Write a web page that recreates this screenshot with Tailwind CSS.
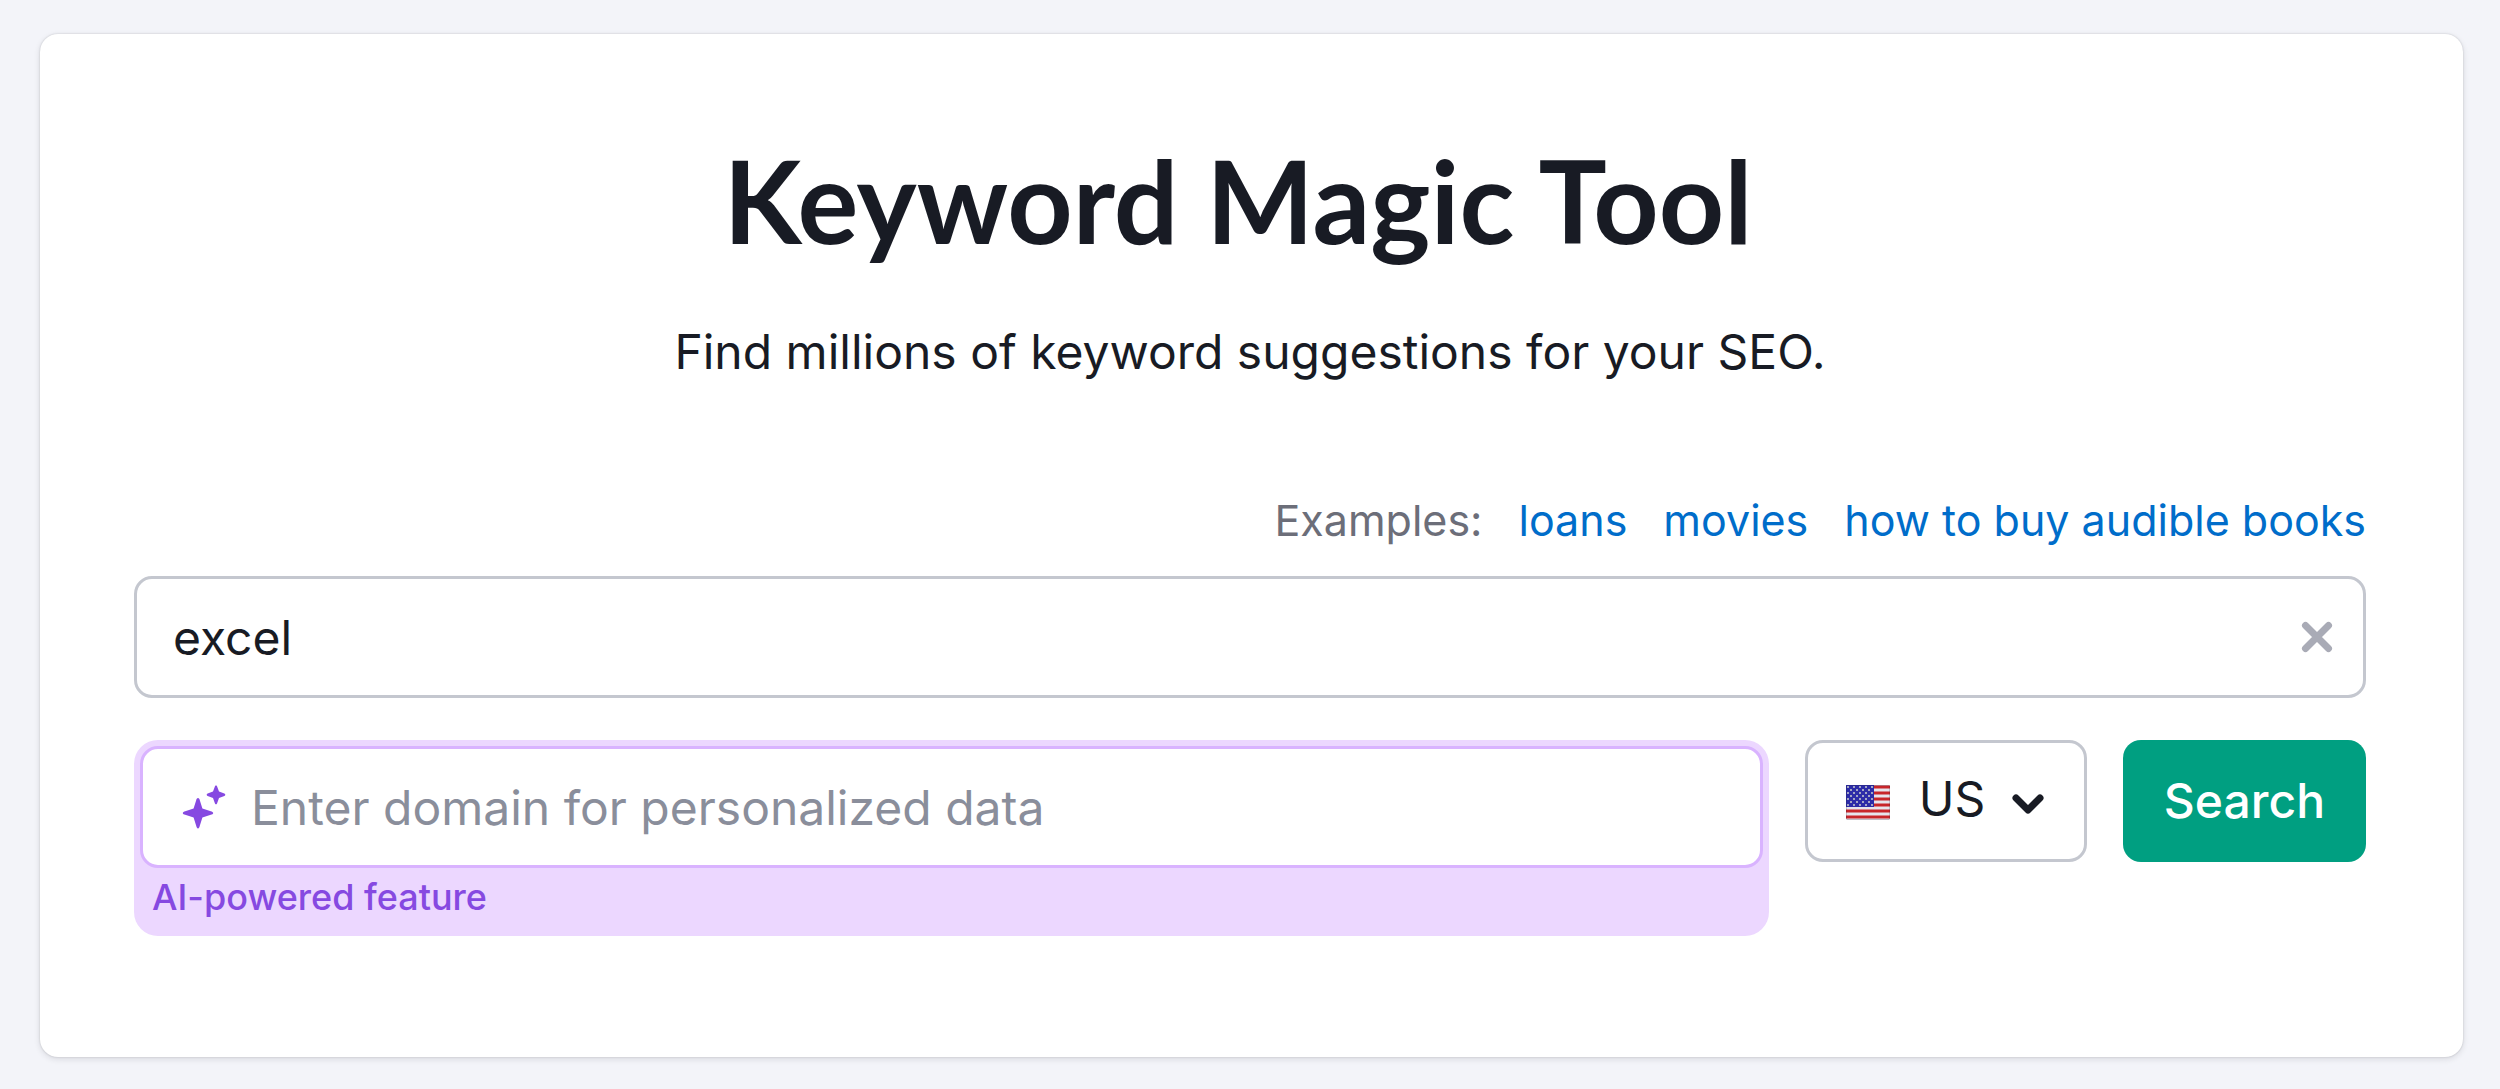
<!DOCTYPE html>
<html lang="en">
<head>
    <meta charset="UTF-8">
    <meta name="viewport" content="width=device-width, initial-scale=1.0">
    <title>Keyword Magic Tool</title>
    <script src="https://cdn.jsdelivr.net/npm/@tailwindcss/browser@4"></script>
</head>
<body class="bg-[#f3f4f9] font-['Inter',sans-serif] text-[#181b24]">
    <main class="mt-[34px] mr-[37px] mb-8 ml-10 rounded-[18px] bg-white pt-[94px] pr-[97px] pb-[121px] pl-[94px] shadow-[0_0_2px_rgba(25,27,35,0.2),0_2px_6px_rgba(25,27,35,0.12)]">
        <h1 class="pr-6 text-center font-['Lato',sans-serif] text-[114px] leading-[144px] font-bold">Keyword Magic Tool</h1>
        <p class="mt-11 text-center text-[48px] leading-[72px]">Find millions of keyword suggestions for your SEO.</p>

        <form id="searchForm" class="mt-[100px]">
            <div class="flex justify-end gap-9 text-[43px] leading-[64px]">
                <span class="text-[#6c6e79]">Examples:</span>
                <a href="#" class="example text-[#006dca]">loans</a>
                <a href="#" class="example text-[#006dca]">movies</a>
                <a href="#" class="example text-[#006dca]">how to buy audible books</a>
            </div>

            <div class="mt-6 flex h-[122px] items-center rounded-[18px] border-3 border-[#c4c7cf] pr-[26px] pl-9">
                <input type="text" id="keyword" aria-label="Keyword" value="excel" class="h-full min-w-0 flex-1 text-[48px] outline-none">
                <button type="button" id="clear" aria-label="Clear" class="text-[#a9abb6]">
                    <svg class="size-10" viewBox="0 0 40 40" fill="none" stroke="currentColor" stroke-width="7" stroke-linecap="round">
                        <path d="M8.500 8.500l23 23M31.500 8.500l-23 23"/>
                    </svg>
                </button>
            </div>

            <div class="mt-[42px] flex items-start gap-9">
                <div class="flex-1 rounded-3xl bg-[#ecd7ff] p-[6px]">
                    <div class="flex h-[122px] items-center gap-6 rounded-[18px] border-3 border-[#d9b3ff] bg-white px-9">
                        <svg class="size-12 text-[#8649e1]" viewBox="0 0 48 48" fill="currentColor">
                            <path d="M19 15c1 0 1.500 1 1.800 2.200l2.600 8.400 8.400 2.600c1.200.3 2.400.8 2.400 1.800s-1.200 1.500-2.400 1.800l-8.400 2.600-2.600 8.400C20.500 44 20 45.500 19 45.500S17.500 44 17.200 42.800l-2.600-8.400-8.400-2.600C5 31.500 3.800 31 3.800 30s1.200-1.500 2.400-1.800l8.400-2.600 2.600-8.400C17.500 16 18 15 19 15z"/>
                            <path d="M37 2.500c.8 0 1.100.7 1.300 1.400l1.700 4.700 4.700 1.700c.8.200 1.600.7 1.600 1.500s-.8 1.300-1.600 1.500l-4.700 1.700-1.700 4.700c-.2.800-.5 1.600-1.300 1.600s-1.100-.8-1.300-1.600l-1.700-4.700-4.700-1.700c-.8-.2-1.600-.7-1.600-1.500s.8-1.300 1.600-1.500l4.700-1.700 1.700-4.700c.2-.7.5-1.400 1.300-1.400z"/>
                        </svg>
                        <input type="text" id="domain" aria-describedby="domainNote" aria-label="Domain" placeholder="Enter domain for personalized data" class="h-full min-w-0 flex-1 text-[48px] outline-none placeholder:text-[#8a8e9b]">
                    </div>
                    <p id="domainNote" class="px-3 pt-2 pb-3 text-[36px] leading-[42px] font-medium text-[#8649e1]">AI-powered feature</p>
                </div>

                <div class="relative flex h-[122px] items-center rounded-[18px] border-3 border-[#c4c7cf]">
                    <svg class="pointer-events-none absolute left-[38px] h-10 w-11" viewBox="0 -4 44 40">
                        <defs>
                            <pattern id="stars" width="6" height="6" patternUnits="userSpaceOnUse">
                                <rect width="6" height="6" fill="#2c2ca8"/>
                                <rect x="1" y="1" width="2" height="2" fill="#a3a5c4"/>
                                <rect x="4" y="4" width="2" height="2" fill="#a3a5c4"/>
                            </pattern>
                        </defs>
                        <rect width="44" height="35" rx="1" fill="#e6e4ec"/>
                        <path d="M0 2h44M0 8h44M0 14h44M0 20h44M0 26h44M0 32h44" stroke="#c8252a" stroke-width="3"/>
                        <rect width="28" height="22" fill="url(#stars)"/>
                        <rect x=".5" y=".5" width="43" height="34" rx="1" fill="none" stroke="#1f2030" stroke-opacity=".2"/>
                    </svg>
                    <select id="country" aria-label="Country" class="h-full appearance-none pr-[98px] pl-[111px] pb-1 text-[48px] outline-none">
                        <option>US</option>
                    </select>
                    <svg class="pointer-events-none absolute right-9 size-10" viewBox="0 0 40 40" fill="none" stroke="currentColor" stroke-width="7" stroke-linecap="round" stroke-linejoin="round">
                        <path d="M8 17l12 12 12-12"/>
                    </svg>
                </div>

                <button type="submit" class="h-[122px] rounded-[18px] bg-[#009f81] px-[41px] text-[48px] font-medium text-white">Search</button>
            </div>
        </form>
    </main>

    <script>
        let keyword = document.getElementById('keyword');

        document.getElementById('clear').addEventListener('click', () => {
            keyword.value = '';
            keyword.focus();
        });

        document.querySelectorAll('.example').forEach(link => {
            link.addEventListener('click', (e) => {
                e.preventDefault();
                keyword.value = link.textContent;
            });
        });

        document.getElementById('searchForm').addEventListener('submit', (e) => {
            e.preventDefault();
        });
    </script>
</body>
</html>
